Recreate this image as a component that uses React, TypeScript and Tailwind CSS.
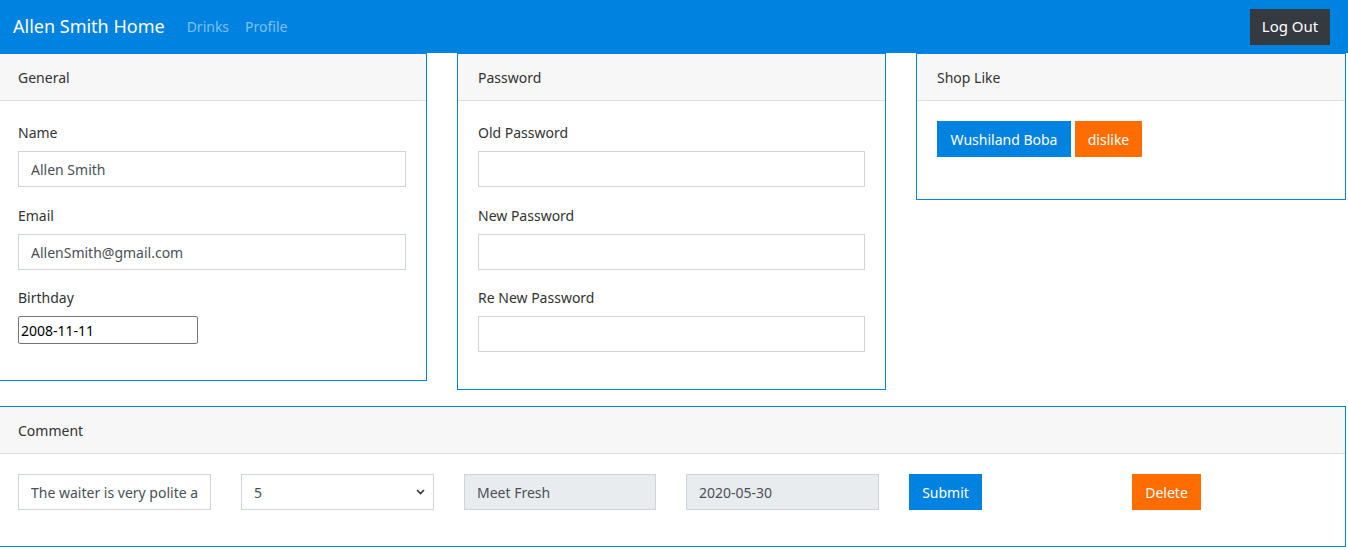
import React from 'react'

const font = { fontFamily: '"Noto Sans", "Open Sans", Arial, sans-serif' }

const Card = ({
    title,
    className,
    children,
}: {
    title: string
    className?: string
    children: React.ReactNode
}) => (
    <div className={`border border-[#0082e0] bg-white ${className || ''}`}>
        <div className="h-[47px] bg-[#f7f7f7] border-b border-[#dddddd] flex items-center px-5 text-[14px] text-[#333]">
            {title}
        </div>
        {children}
    </div>
)

const Field = ({ label, value, tight }: { label: string; value?: string; tight?: boolean }) => (
    <div className={tight ? 'mb-[17px]' : 'mb-[18px]'}>
        <div className="text-[14px] text-[#333] leading-[21px] mb-2">{label}</div>
        <input
            readOnly
            value={value || ''}
            className="block w-full h-[36px] border border-[#ced4da] px-3 text-[14px] text-[#495057] outline-none"
        />
    </div>
)

const App = () => {
    return (
        <div className="w-[1348px] h-[550px] bg-white overflow-hidden" style={font}>
            <nav className="h-[53px] bg-[#0082e0] flex items-center pl-[13px] pr-[18px]">
                <div className="text-white text-[18px] mr-[22px]">Allen Smith Home</div>
                <div className="flex gap-4 text-[14px] text-[#7fc0ef]">
                    <span>Drinks</span>
                    <span>Profile</span>
                </div>
                <button className="ml-auto h-[36px] w-[80px] bg-[#343a40] text-white text-[15px]">
                    Log Out
                </button>
            </nav>

            <div className="flex items-start gap-[30px]">
                <Card title="General" className="w-[430px] -ml-[3px]">
                    <div className="px-5 pt-[21px] pb-[18px]">
                        <Field label="Name" value="Allen Smith" />
                        <Field label="Email" value="AllenSmith@gmail.com" tight />
                        <div className="mb-[18px]">
                            <div className="text-[14px] text-[#333] leading-[21px] mb-2">Birthday</div>
                            <input
                                readOnly
                                value="2008-11-11"
                                className="block w-[180px] h-[28px] border border-[#767676] rounded-[2px] px-[2px] text-[14px] text-black outline-none"
                            />
                        </div>
                    </div>
                </Card>
                <Card title="Password" className="w-[429px]">
                    <div className="px-5 pt-[21px] pb-[19px]">
                        <Field label="Old Password" />
                        <Field label="New Password" tight />
                        <Field label="Re New Password" />
                    </div>
                </Card>
                <Card title="Shop Like" className="w-[430px]">
                    <div className="px-5 pt-[20px] pb-[42px] flex gap-1">
                        <button className="h-[36px] w-[134px] bg-[#0082e0] text-white text-[14px]">
                            Wushiland Boba
                        </button>
                        <button className="h-[36px] w-[67px] bg-[#ff6d00] text-white text-[14px]">
                            dislike
                        </button>
                    </div>
                </Card>
            </div>

            <div className="mt-[16px]">
                <Card title="Comment" className="w-[1349px] -ml-[3px]">
                    <div className="px-5 pt-[20px] pb-[36px] flex">
                        <div className="w-[223px]">
                            <input
                                readOnly
                                value="The waiter is very polite and"
                                className="block w-[193px] h-[36px] border border-[#ced4da] px-3 text-[14px] text-[#495057] outline-none"
                            />
                        </div>
                        <div className="w-[223px]">
                            <div className="relative w-[193px] h-[36px] border border-[#ced4da] px-3 flex items-center text-[14px] text-[#495057]">
                                5
                                <svg
                                    className="absolute right-[8px] top-[14px]"
                                    width="9"
                                    height="6"
                                    viewBox="0 0 9 6"
                                >
                                    <path d="M1 1l3.5 3.5L8 1" stroke="#333" strokeWidth="1.6" fill="none" />
                                </svg>
                            </div>
                        </div>
                        <div className="w-[222px]">
                            <div className="w-[192px] h-[36px] border border-[#ced4da] bg-[#e9ecef] px-3 flex items-center text-[14px] text-[#495057]">
                                Meet Fresh
                            </div>
                        </div>
                        <div className="w-[223px]">
                            <div className="w-[193px] h-[36px] border border-[#ced4da] bg-[#e9ecef] px-3 flex items-center text-[14px] text-[#495057]">
                                2020-05-30
                            </div>
                        </div>
                        <div className="w-[223px]">
                            <button className="w-[73px] h-[36px] bg-[#0082e0] text-white text-[14px]">
                                Submit
                            </button>
                        </div>
                        <div>
                            <button className="w-[69px] h-[36px] bg-[#ff6d00] text-white text-[14px]">
                                Delete
                            </button>
                        </div>
                    </div>
                </Card>
            </div>
        </div>
    )
}

export default App
